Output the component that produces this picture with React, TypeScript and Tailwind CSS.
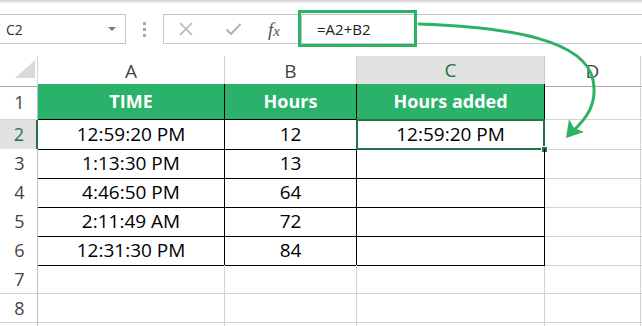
import React from 'react';

const font = { fontFamily: '"Open Sans", "Liberation Sans", sans-serif' };

type Row = { n: number; time: string; hours: string; added: string };

const rows: Row[] = [
  { n: 2, time: '12:59:20 PM', hours: '12', added: '12:59:20 PM' },
  { n: 3, time: '1:13:30 PM', hours: '13', added: '' },
  { n: 4, time: '4:46:50 PM', hours: '64', added: '' },
  { n: 5, time: '2:11:49 AM', hours: '72', added: '' },
  { n: 6, time: '12:31:30 PM', hours: '84', added: '' },
];

const grid = 'grid grid-cols-[38px_187px_132px_188px_96px_1fr]';

function RowHead({ n, selected }: { n?: number; selected?: boolean }) {
  return (
    <div
      className={
        selected
          ? 'flex items-center justify-center bg-[#e1e1e1] text-[#217346] border-b border-[#c8c8c8] border-r-2 border-r-[#217346]'
          : 'flex items-center justify-center bg-white text-[#444] border-b border-[#d4d4d4] border-r border-r-[#bdbdbd]'
      }
    >
      <span className="text-[18px] leading-none pl-[2px]">{n}</span>
    </div>
  );
}

export default function App() {
  return (
    <div className="relative w-[642px] h-[326px] overflow-hidden bg-white select-none" style={font}>
      <div className="h-[4px] bg-gradient-to-b from-[#d0d0d0] to-white" />

      {/* formula bar */}
      <div className="h-[52px] flex items-start pt-[10px]">
        <div className="w-[126px] h-[30px] border border-[#c6c6c6] border-l-0 flex items-center justify-between pl-[6px] pr-[9px]">
          <span className="text-[14px] text-[#333]">C2</span>
          <span className="w-0 h-0 border-l-[4px] border-r-[4px] border-t-[4px] border-l-transparent border-r-transparent border-t-[#777]" />
        </div>
        <div className="w-[37px] h-[30px] flex flex-col items-center justify-center gap-[3px]">
          <span className="w-[3px] h-[3px] bg-[#a8a8a8]" />
          <span className="w-[3px] h-[3px] bg-[#a8a8a8]" />
          <span className="w-[3px] h-[3px] bg-[#a8a8a8]" />
        </div>
        <div className="flex-1 h-[30px] border border-[#c6c6c6] border-r-0 flex items-center">
          <div className="w-[137px] flex items-center h-full">
            <svg width="16" height="16" viewBox="0 0 16 16" className="ml-[14px]">
              <path d="M2 2 L14 14 M14 2 L2 14" stroke="#b4b4b4" strokeWidth="1.6" fill="none" />
            </svg>
            <svg width="17" height="14" viewBox="0 0 17 14" className="ml-[31px]">
              <path d="M1.5 7.5 L6 12 L15.5 2" stroke="#b4b4b4" strokeWidth="2.2" fill="none" />
            </svg>
            <span
              className="ml-[26px] text-[19px] italic text-[#555] leading-none"
              style={{ fontFamily: '"Liberation Serif", serif' }}
            >
              f<span className="text-[15px]">x</span>
            </span>
          </div>
          <div className="h-full border-l border-[#c6c6c6] flex items-center pl-[15px]">
            <span className="text-[15px] text-[#222]">=A2+B2</span>
          </div>
        </div>
      </div>

      {/* column headers */}
      <div className={`${grid} h-[28px]`}>
        <div className="relative bg-white border-r border-[#d4d4d4] border-b border-b-[#ababab]">
          <svg width="38" height="28" className="absolute left-0 top-0">
            <path d="M15 22 L35 22 L35 4 Z" fill="#dadada" />
          </svg>
        </div>
        {['A', 'B'].map((c) => (
          <div key={c} className="flex items-center justify-center border-r border-[#d4d4d4] border-b border-b-[#ababab] text-[19px] text-[#444]">
            {c}
          </div>
        ))}
        <div className="flex items-center justify-center bg-[#e1e1e1] border-r border-[#c8c8c8] border-b-2 border-b-[#217346] text-[19px] text-[#217346]">
          C
        </div>
        <div className="flex items-center justify-center border-r border-[#d4d4d4] border-b border-b-[#ababab] text-[19px] text-[#444]">
          D
        </div>
        <div className="border-b border-b-[#ababab]" />
      </div>

      {/* row 1 */}
      <div className={`${grid} h-[36px]`}>
        <RowHead n={1} />
        {['TIME', 'Hours', 'Hours added'].map((h) => (
          <div key={h} className="flex items-center justify-center bg-[#2ab26a] border-r border-black border-b border-b-black text-white font-bold text-[18px]">
            {h}
          </div>
        ))}
        <div className="border-r border-[#d4d4d4] border-b" />
        <div className="border-b border-[#d4d4d4]" />
      </div>

      {/* data rows */}
      {rows.map((r) => (
        <div key={r.n} className={`${grid} h-[29px]`}>
          <RowHead n={r.n} selected={r.n === 2} />
          <div className="flex items-center justify-center border-r border-black border-b border-b-black text-[19px] text-black">
            {r.time}
          </div>
          <div className="flex items-center justify-center border-r border-black border-b border-b-black text-[19px] text-black">
            {r.hours}
          </div>
          <div className="relative flex items-center justify-center border-r border-black border-b border-b-black text-[19px] text-black">
            {r.added}
            {r.n === 2 && (
              <>
                <div className="absolute -left-px -top-px -right-px -bottom-px border-2 border-[#217346]" />
                <div className="absolute -right-[4px] -bottom-[4px] w-[7px] h-[7px] bg-[#217346] border border-white" />
              </>
            )}
          </div>
          <div className="border-r border-[#d4d4d4] border-b border-b-[#d4d4d4]" />
          <div className="border-b border-[#d4d4d4]" />
        </div>
      ))}

      {[7, 8, undefined].map((n, i) => (
        <div key={i} className={`${grid} h-[29px]`}>
          <RowHead n={n} />
          <div className="border-r border-b border-[#d4d4d4]" />
          <div className="border-r border-b border-[#d4d4d4]" />
          <div className="border-r border-b border-[#d4d4d4]" />
          <div className="border-r border-b border-[#d4d4d4]" />
          <div className="border-b border-[#d4d4d4]" />
        </div>
      ))}

      {/* annotation */}
      <svg className="absolute left-0 top-0 pointer-events-none" width="642" height="326" viewBox="0 0 642 326">
        <rect x="299.5" y="11.5" width="116" height="34" fill="none" stroke="#2db264" strokeWidth="3" />
        <path
          d="M419 24 C 510 27, 585 40, 593 80 C 598 105, 585 120, 572 132"
          fill="none"
          stroke="#2db264"
          strokeWidth="3"
          strokeLinecap="round"
        />
        <path d="M566 138 L569 119 L574 128 L584 132 Z" fill="#2db264" />
      </svg>
    </div>
  );
}
